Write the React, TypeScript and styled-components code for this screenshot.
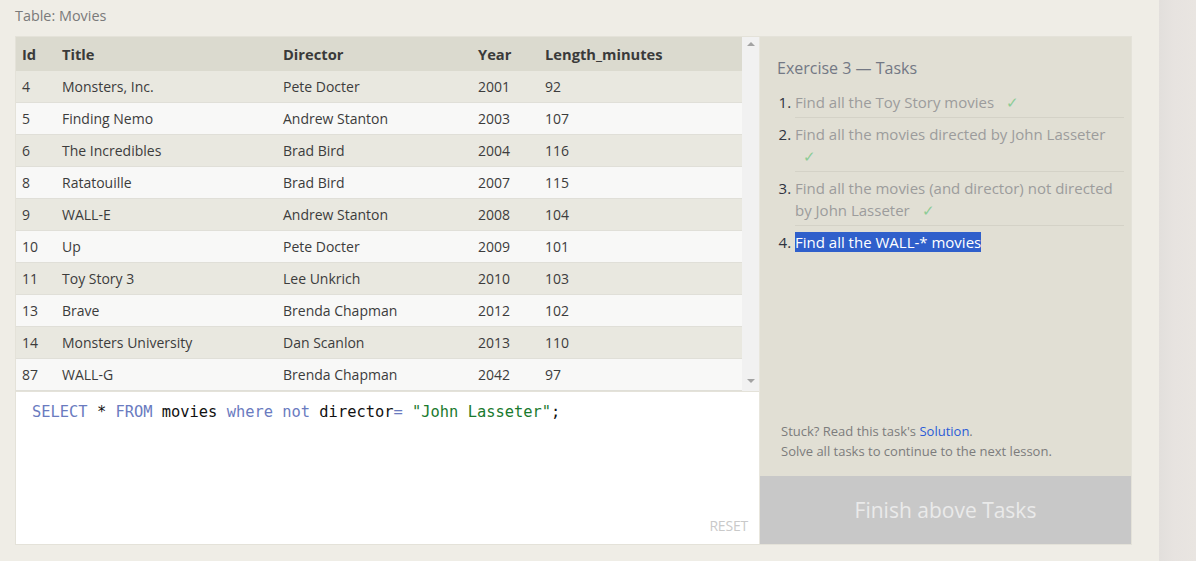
import React from "react";
import styled, { createGlobalStyle } from "styled-components";

const Global = createGlobalStyle`
  html, body { margin: 0; padding: 0; }
  body {
    background: #efede6;
    font-family: "Open Sans", "Noto Sans", sans-serif;
    color: #333;
  }
`;

const Page = styled.div`
  display: flex;
  width: 1196px;
  height: 561px;
  overflow: hidden;
`;

const Main = styled.div`
  width: 1159px;
  padding: 0 28px 0 16px;
  box-sizing: border-box;
  background: #efede6;
`;

const SideStrip = styled.div`
  flex: 1;
  background: linear-gradient(90deg, #e2dfdc 0%, #e7e3e0 40%, #e9e5e1 100%);
`;

const Caption = styled.div`
  height: 37px;
  padding-top: 6px;
  box-sizing: border-box;
  margin-left: -1px;
  font-size: 14.4px;
  line-height: 20px;
  color: #7a7a7a;
`;

const Exercise = styled.div`
  display: grid;
  grid-template-columns: 743px 372px;
  height: 507px;
  box-shadow: 0 0 0 1px #e4e2d9;
`;

const LeftCol = styled.div`
  display: flex;
  flex-direction: column;
  min-width: 0;
`;

const TableArea = styled.div`
  display: flex;
  height: 354px;
`;

const Table = styled.div`
  flex: 1;
  display: flex;
  flex-direction: column;
`;

const Row = styled.div<{ $kind: "head" | "odd" | "even" }>`
  display: grid;
  grid-template-columns: 40px 221px 195px 67px 1fr;
  align-items: center;
  flex: ${(p) => (p.$kind === "head" ? "0 0 34px" : "1 1 0")};
  box-sizing: border-box;
  padding-left: 6px;
  background: ${(p) =>
    p.$kind === "head" ? "#dbdacf" : p.$kind === "odd" ? "#e9e8e0" : "#f8f8f7"};
  color: ${(p) => (p.$kind === "head" ? "#3a3a3a" : "#3c3c3c")};
  font-weight: ${(p) => (p.$kind === "head" ? 700 : 400)};
  font-size: ${(p) => (p.$kind === "head" ? "14.7px" : "14px")};
  border-bottom: ${(p) => (p.$kind === "head" ? "none" : "1px solid #e0dfd8")};
`;

const Cell = styled.div`
  white-space: nowrap;
`;

const ScrollBar = styled.div`
  width: 17px;
  background: #f1f1f1;
  display: flex;
  flex-direction: column;
  justify-content: space-between;
  align-items: center;
  padding: 5px 0 8px;
  box-sizing: border-box;
`;

const Arrow = styled.div<{ $down?: boolean }>`
  width: 0;
  height: 0;
  border-left: 4px solid transparent;
  border-right: 4px solid transparent;
  ${(p) =>
    p.$down
      ? "border-top: 4px solid #a3a3a3;"
      : "border-bottom: 4px solid #a3a3a3;"}
`;

const Editor = styled.div`
  flex: 1;
  background: #fff;
  border-top: 1px solid #e4e2d9;
  position: relative;
  padding: 9px 16px;
  box-sizing: border-box;
`;

const Code = styled.div`
  font-family: "DejaVu Sans Mono", "Liberation Mono", monospace;
  font-size: 15.4px;
  line-height: 22px;
  color: #111;
  white-space: pre;
`;

const Kw = styled.span`
  color: #6a7bbf;
`;
const Str = styled.span`
  color: #197a2e;
`;

const Reset = styled.div`
  position: absolute;
  right: 11px;
  bottom: 9px;
  font-size: 14px;
  color: #c9c9c9;
  letter-spacing: -0.2px;
`;

const Panel = styled.div`
  display: flex;
  flex-direction: column;
  background: #e1dfd4;
  border-left: 1px solid #e8e6dd;
`;

const PanelBody = styled.div`
  flex: 1;
  padding: 20px 7px 0 17px;
  display: flex;
  flex-direction: column;
`;

const PanelTitle = styled.div`
  font-size: 16px;
  line-height: 22px;
  color: #737884;
  margin-bottom: 12px;
`;

const Tasks = styled.ol`
  margin: 0;
  padding: 0 0 0 18px;
  font-size: 15px;
  line-height: 22px;
`;

const Task = styled.li<{ $last?: boolean }>`
  color: #333;
  padding: 0 0 ${(p) => (p.$last ? "0" : "4px")};
  margin-bottom: ${(p) => (p.$last ? "0" : "5px")};
  border-bottom: ${(p) => (p.$last ? "none" : "1px solid #d4d2c7")};
  &::marker {
    color: #2f3340;
  }
`;

const Done = styled.span`
  color: #9c9c9c;
`;

const Check = styled.span`
  color: #8ccc96;
  margin-left: 8px;
`;

const Selected = styled.span`
  background: #2f5fcb;
  color: #fff;
`;

const Help = styled.div`
  margin-top: auto;
  padding: 0 0 15px 4px;
  font-size: 13px;
  line-height: 20px;
  color: #7c7c7c;
`;

const Link = styled.a`
  color: #2a5bd7;
  text-decoration: none;
`;

const FinishButton = styled.div`
  height: 68px;
  background: #c8c8c8;
  color: #eaeaea;
  font-size: 21px;
  display: flex;
  align-items: center;
  justify-content: center;
`;

const movies = [
  [4, "Monsters, Inc.", "Pete Docter", 2001, 92],
  [5, "Finding Nemo", "Andrew Stanton", 2003, 107],
  [6, "The Incredibles", "Brad Bird", 2004, 116],
  [8, "Ratatouille", "Brad Bird", 2007, 115],
  [9, "WALL-E", "Andrew Stanton", 2008, 104],
  [10, "Up", "Pete Docter", 2009, 101],
  [11, "Toy Story 3", "Lee Unkrich", 2010, 103],
  [13, "Brave", "Brenda Chapman", 2012, 102],
  [14, "Monsters University", "Dan Scanlon", 2013, 110],
  [87, "WALL-G", "Brenda Chapman", 2042, 97],
];

const doneTasks = [
  "Find all the Toy Story movies",
  "Find all the movies directed by John Lasseter",
  "Find all the movies (and director) not directed by John Lasseter",
];

export default function App() {
  return (
    <>
      <Global />
      <Page>
        <Main>
          <Caption>Table: Movies</Caption>
          <Exercise>
            <LeftCol>
              <TableArea>
                <Table>
                  <Row $kind="head">
                    <Cell>Id</Cell>
                    <Cell>Title</Cell>
                    <Cell>Director</Cell>
                    <Cell>Year</Cell>
                    <Cell>Length_minutes</Cell>
                  </Row>
                  {movies.map((m, i) => (
                    <Row key={String(m[0])} $kind={i % 2 === 0 ? "odd" : "even"}>
                      {m.map((v, j) => (
                        <Cell key={j}>{v}</Cell>
                      ))}
                    </Row>
                  ))}
                </Table>
                <ScrollBar>
                  <Arrow />
                  <Arrow $down />
                </ScrollBar>
              </TableArea>
              <Editor>
                <Code>
                  <Kw>SELECT</Kw> * <Kw>FROM</Kw> movies <Kw>where</Kw> <Kw>not</Kw> director
                  <Kw>=</Kw> <Str>"John Lasseter"</Str>;
                </Code>
                <Reset>RESET</Reset>
              </Editor>
            </LeftCol>
            <Panel>
              <PanelBody>
                <PanelTitle>Exercise 3 — Tasks</PanelTitle>
                <Tasks>
                  {doneTasks.map((t) => (
                    <Task key={t}>
                      <Done>{t}</Done> <Check>✓</Check>
                    </Task>
                  ))}
                  <Task $last>
                    <Selected>Find all the WALL-* movies</Selected>
                  </Task>
                </Tasks>
                <Help>
                  Stuck? Read this task's <Link>Solution</Link>.
                  <br />
                  Solve all tasks to continue to the next lesson.
                </Help>
              </PanelBody>
              <FinishButton>Finish above Tasks</FinishButton>
            </Panel>
          </Exercise>
        </Main>
        <SideStrip />
      </Page>
    </>
  );
}
